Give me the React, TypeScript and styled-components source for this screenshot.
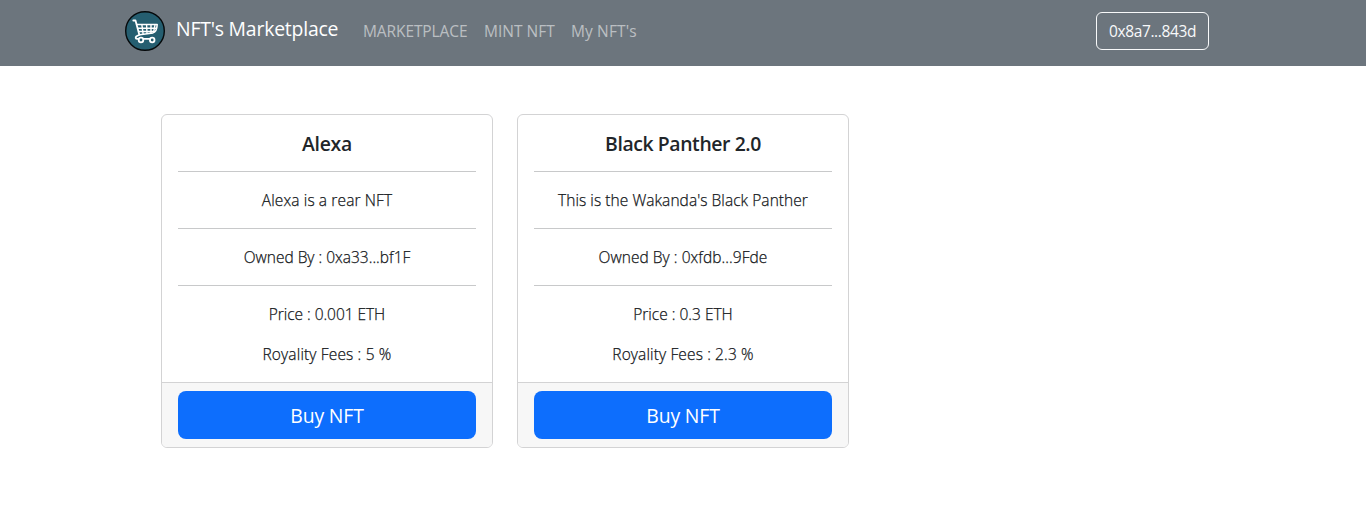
import React from "react";
import styled, { createGlobalStyle } from "styled-components";

const GlobalStyle = createGlobalStyle`
  *, *::before, *::after { box-sizing: border-box; }
  body {
    margin: 0;
    background: #fff;
    color: #212529;
    font-family: "Segoe UI", "Open Sans", "Noto Sans", sans-serif;
    font-size: 15.5px;
    line-height: 24px;
  }
`;

const Navbar = styled.header`
  height: 66px;
  background: #6c757d;
`;

const NavContainer = styled.div`
  display: flex;
  align-items: flex-start;
  width: 1140px;
  margin: 0 auto;
  padding: 11px 44px 0 12px;
`;

const Logo = styled.svg`
  display: block;
  width: 40px;
  height: 40px;
  flex: none;
`;

const Brand = styled.a`
  width: 190px;
  padding: 3px 0 0 11px;
  color: #fff;
  font-size: 19.4px;
  line-height: 29px;
  white-space: nowrap;
`;

const Nav = styled.nav`
  display: flex;
  flex: 1;
`;

const NavLink = styled.a<{ $width: number }>`
  width: ${(p) => p.$width}px;
  padding: 8px 0 8px 8px;
  color: rgba(255, 255, 255, 0.55);
  line-height: 25px;
  white-space: nowrap;
`;

const Fit = styled.span<{ $track: number }>`
  letter-spacing: ${(p) => p.$track}px;
`;

const AccountButton = styled.button`
  width: 113px;
  height: 38px;
  margin-top: 1px;
  padding: 0;
  border: 1px solid #f8f9fa;
  border-radius: 6px;
  background: transparent;
  color: #f8f9fa;
  font: inherit;
`;

const CardGrid = styled.main`
  display: grid;
  grid-template-columns: repeat(3, 332px);
  gap: 24px;
  width: 1044px;
  margin: 48px auto 0;
`;

const Card = styled.article`
  border: 1px solid #d3d3d4;
  border-radius: 6px;
  overflow: hidden;
  text-align: center;
`;

const CardBody = styled.div`
  padding: 16px;
`;

const CardTitle = styled.h2`
  height: 24px;
  margin: 0;
  font-size: 19.4px;
  font-weight: 600;
  line-height: 26px;
`;

const Divider = styled.hr`
  height: 1px;
  margin: 16px 0;
  border: 0;
  background: #c8c9ca;
`;

const CardText = styled.p`
  margin: 0;
  font-weight: 300;
  color: #14171a;
  -webkit-text-stroke: 0.25px currentColor;

  & + & {
    margin-top: 16px;
  }
`;

const CardFooter = styled.footer`
  padding: 8px 16px;
  border-top: 1px solid #d3d3d4;
  background: #f7f7f7;
`;

const BuyButton = styled.button`
  display: block;
  width: 100%;
  height: 48px;
  padding: 2px 0 0;
  border: 0;
  border-radius: 8px;
  background: #0d6efd;
  color: #fff;
  font: inherit;
  font-size: 19.4px;
  line-height: 30px;
`;

type Line = [text: string, track: number];

const links: [string, number, number][] = [
  ["MARKETPLACE", 121, -0.1],
  ["MINT NFT", 87, 0],
  ["My NFT's", 82, 0.12],
];

const nfts: { title: Line; about: Line; owner: Line; price: Line; fees: Line }[] = [
  {
    title: ["Alexa", -0.3],
    about: ["Alexa is a rear NFT", 0.12],
    owner: ["Owned By : 0xa33...bf1F", 0],
    price: ["Price : 0.001 ETH", -0.05],
    fees: ["Royality Fees : 5 %", 0.15],
  },
  {
    title: ["Black Panther 2.0", -0.4],
    about: ["This is the Wakanda's Black Panther", 0.06],
    owner: ["Owned By : 0xfdb...9Fde", 0.05],
    price: ["Price : 0.3 ETH", 0],
    fees: ["Royality Fees : 2.3 %", 0.13],
  },
];

const Fitted = ({ line }: { line: Line }) => <Fit $track={line[1]}>{line[0]}</Fit>;

const CartLogo = () => (
  <Logo viewBox="0 0 40 40" fill="none">
    <circle cx="20" cy="20" r="19.3" fill="#255e70" stroke="#05090b" strokeWidth="1.4" />
    <g stroke="#fff" strokeLinecap="round" strokeLinejoin="round">
      <path d="M8.3 9.5h2.2l3.7 13.8M14.6 23.7l-3.1 1.5c-1.4 1-.9 2.6.8 2.6h15.5" strokeWidth="1.8" />
      <path d="M12 13.6H32.2c-.2 4-1.5 7.4-4.2 8.3l-13.3 1.8M13.3 17.2h18M14 20.5h16" strokeWidth="1.5" />
      <path d="M16.9 13.8l1.2 9M21.6 13.8l.4 8.5M26 13.8v8.2M30 13.8l-1.4 7.5" strokeWidth="1.4" />
    </g>
    <g fill="#255e70" stroke="#fff" strokeWidth="1.8">
      <circle cx="16" cy="29" r="2.3" />
      <circle cx="27.2" cy="29" r="2.3" />
    </g>
  </Logo>
);

export default function App() {
  return (
    <>
      <GlobalStyle />
      <Navbar>
        <NavContainer>
          <CartLogo />
          <Brand>
            <Fitted line={["NFT's Marketplace", -0.2]} />
          </Brand>
          <Nav>
            {links.map(([label, width, track]) => (
              <NavLink key={label} $width={width}>
                <Fitted line={[label, track]} />
              </NavLink>
            ))}
          </Nav>
          <AccountButton>
            <Fitted line={["0x8a7...843d", -0.38]} />
          </AccountButton>
        </NavContainer>
      </Navbar>
      <CardGrid>
        {nfts.map((nft) => (
          <Card key={nft.title[0]}>
            <CardBody>
              <CardTitle><Fitted line={nft.title} /></CardTitle>
              <Divider />
              <CardText><Fitted line={nft.about} /></CardText>
              <Divider />
              <CardText><Fitted line={nft.owner} /></CardText>
              <Divider />
              <CardText><Fitted line={nft.price} /></CardText>
              <CardText><Fitted line={nft.fees} /></CardText>
            </CardBody>
            <CardFooter>
              <BuyButton><Fitted line={["Buy NFT", -0.15]} /></BuyButton>
            </CardFooter>
          </Card>
        ))}
      </CardGrid>
    </>
  );
}
